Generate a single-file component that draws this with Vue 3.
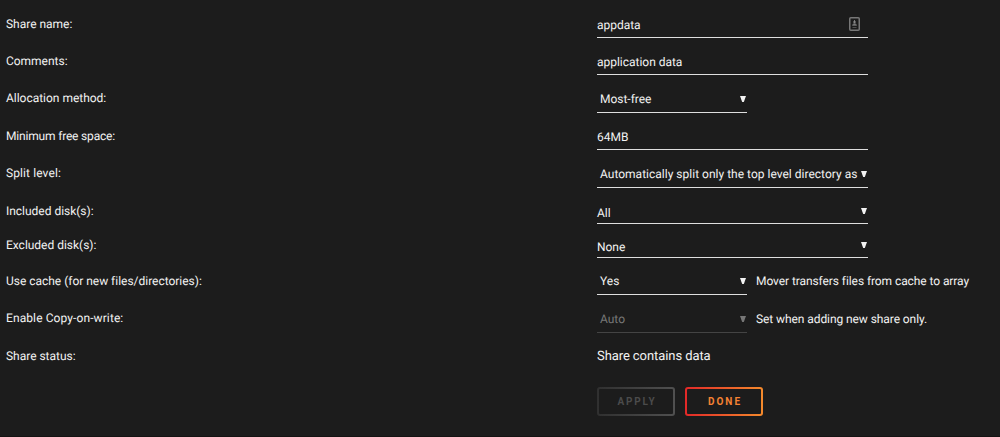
<script setup>
const rows = [
  { label: 'Share name:', value: 'appdata', kind: 'text', cls: 'name', icon: true },
  { label: 'Comments:', value: 'application data', kind: 'text', cls: 'comments' },
  { label: 'Allocation method:', value: 'Most-free', kind: 'select', cls: 'allocation', narrow: true },
  { label: 'Minimum free space:', value: '64MB', kind: 'text', cls: 'minimum' },
  { label: 'Split level:', value: 'Automatically split only the top level directory as', kind: 'select', cls: 'split' },
  { label: 'Included disk(s):', value: 'All', kind: 'multi', cls: 'included' },
  { label: 'Excluded disk(s):', value: 'None', kind: 'multi', cls: 'excluded' },
  { label: 'Use cache (for new files/directories):', value: 'Yes', kind: 'select', cls: 'cache', narrow: true, note: 'Mover transfers files from cache to array' },
  { label: 'Enable Copy-on-write:', value: 'Auto', kind: 'select', cls: 'cow', narrow: true, disabled: true, note: 'Set when adding new share only.' },
]
</script>

<template>
  <main class="page">
    <div v-for="row in rows" :key="row.cls" class="row" :class="row.cls">
      <div class="label"><span>{{ row.label }}</span></div>
      <div class="field" :class="[row.kind, { narrow: row.narrow, disabled: row.disabled }]">
        <span class="value">{{ row.value }}</span>
        <svg v-if="row.icon" class="card" width="11" height="14" viewBox="0 0 11 14">
          <rect x="0.75" y="0.75" width="9.5" height="12.5" rx="1" fill="none" stroke="#777" stroke-width="1.5" />
          <path d="M5.5 3v3" fill="none" stroke="#777" />
          <path d="M3.5 8.5Q3.5 6.5 5.5 6.5T7.5 8.5ZM3.5 10.5h4" fill="#777" stroke="#666" stroke-width="0.7" />
          <circle cx="5.5" cy="5" r="1.2" fill="#888" />
        </svg>
        <svg v-if="row.kind !== 'text'" class="arrow" width="6" height="6" viewBox="0 0 6 6">
          <path d="M0 0h6L3.8 6H2.2Z" fill="currentColor" />
        </svg>
      </div>
      <div v-if="row.note" class="note"><span>{{ row.note }}</span></div>
    </div>
    <div class="row status">
      <div class="label"><span>Share status:</span></div>
      <div class="state">Share contains data</div>
    </div>
    <div class="actions">
      <button class="apply" disabled>APPLY</button>
      <button class="done">DONE</button>
    </div>
  </main>
</template>

<style scoped>
.page {
  box-sizing: border-box;
  height: 437px;
  overflow: hidden;
  background: #1c1c1c;
  border-bottom: 1px solid #151313;
  color: #f2f2f2;
  font: 400 12px/18px Roboto, "Noto Sans", sans-serif;
  letter-spacing: -0.02px;
  white-space: nowrap;
  text-rendering: geometricPrecision;
}
.row {
  box-sizing: border-box;
  display: flex;
  align-items: flex-end;
  height: 38px;
  padding-left: 6px;
}
.comments, .minimum, .cache { height: 37px; }
.included { height: 36px; }
.excluded { height: 34px; }
.label { width: 591px; padding-bottom: 5px; }
.allocation .label, .split .label, .cow .label { padding-bottom: 6px; }
.included .label, .excluded .label { padding-bottom: 4px; }
.minimum .label { letter-spacing: -0.18px; }
.split .label, .cow .label { letter-spacing: 0.1px; }
.field {
  box-sizing: border-box;
  display: flex;
  align-items: center;
  justify-content: space-between;
  width: 271px;
  height: 26px;
  border-bottom: 1px solid #dedede;
  padding-right: 1px;
}
.value { line-height: 18px; }
.narrow { width: 150px; }
.select { padding-left: 3px; height: 28px; }
.multi { height: 22px; }
.multi .value { padding-top: 1px; }
.multi .arrow { margin-bottom: 3px; }
.split .value { letter-spacing: 0.01px; }
.disabled { color: #777; border-color: #444; }
.card { margin-right: 7px; margin-bottom: 1px; }
.note { margin-left: 9px; padding-bottom: 5px; letter-spacing: -0.08px; }
.status { height: 34px; }
.status .label { padding-bottom: 2px; }
.state { font-size: 13px; padding-bottom: 1px; letter-spacing: -0.08px; }
.actions { display: flex; gap: 10px; padding: 20px 0 0 597px; }
button {
  box-sizing: border-box;
  width: 78px;
  height: 29px;
  padding: 1px 0 0 2px;
  border: 2px solid transparent;
  border-radius: 3px;
  font: bold 10px/14px Roboto, sans-serif;
  letter-spacing: 2px;
}
.apply {
  letter-spacing: 1.8px;
  color: #4b4b4b;
  background: linear-gradient(#1c1c1c, #1c1c1c) padding-box, linear-gradient(90deg, #303030, #505050) border-box;
}
.done {
  color: #f58233;
  background: linear-gradient(#1c1c1c, #1c1c1c) padding-box, linear-gradient(90deg, #e22828, #f48a2c) border-box;
}
</style>

<style>
body { background: #1c1c1c; }
</style>
